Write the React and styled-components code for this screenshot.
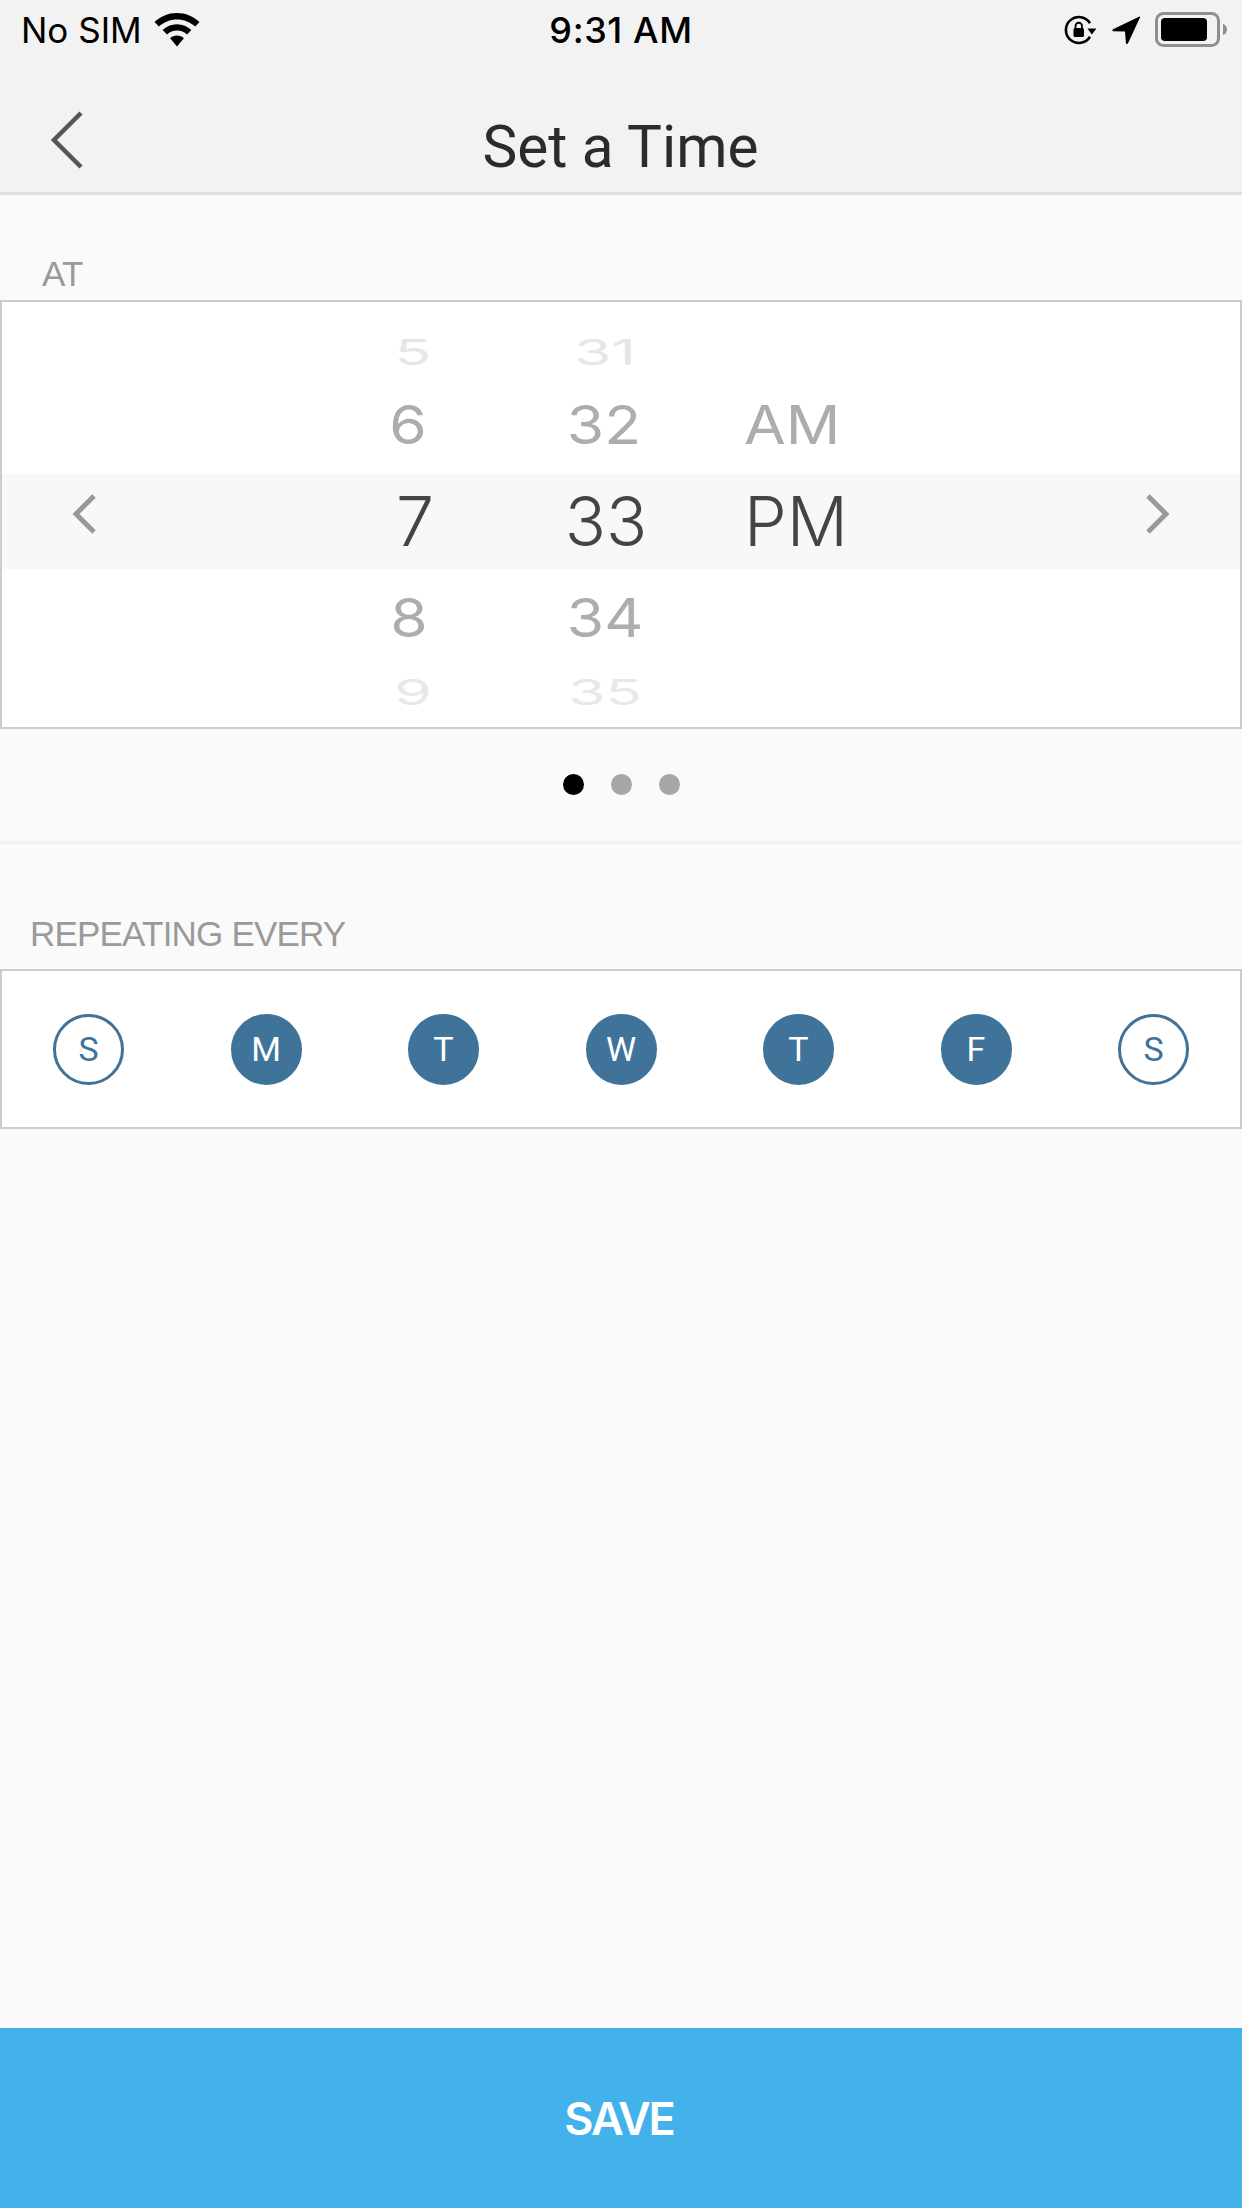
import React from "react";
import styled, { createGlobalStyle } from "styled-components";

const Global = createGlobalStyle`
  html, body { margin: 0; padding: 0; background: #fafafa; }
  #root { width: 1242px; }
`;

const Page = styled.div`
  width: 1242px;
  height: 2208px;
  display: flex;
  flex-direction: column;
  background: #fafafa;
  font-family: "Liberation Sans", Arial, sans-serif;
`;

const Top = styled.header`
  height: 192px;
  background: #f2f2f2;
  border-bottom: 3px solid #dedede;
  display: flex;
  flex-direction: column;
`;

const StatusBar = styled.div`
  height: 60px;
  display: grid;
  grid-template-columns: 1fr auto 1fr;
  align-items: center;
  color: #000;
  font-family: Inter, "Liberation Sans", sans-serif;
`;

const StatusLeft = styled.div`
  display: flex;
  align-items: center;
  padding-left: 21px;
  gap: 12px;
  font-size: 35px;
`;

const Clock = styled.div`
  font-size: 36px;
  font-weight: 500;
  letter-spacing: 0.6px;
`;

const StatusRight = styled.div`
  display: flex;
  align-items: center;
  justify-content: flex-end;
  padding-right: 15px;
  gap: 15px;
`;

const NavBar = styled.div`
  height: 132px;
  position: relative;
  display: flex;
  align-items: center;
  justify-content: center;
`;

const BackIcon = styled.svg`
  position: absolute;
  left: 50px;
  top: 50px;
`;

const Title = styled.h1`
  margin: 0;
  padding: 42px 1px 0 0;
  font-family: Roboto, "Liberation Sans", sans-serif;
  font-weight: 400;
  font-size: 58.5px;
  color: #2b2b2b;
`;

const Label = styled.div`
  padding-left: ${(p) => p.$left}px;
  padding-top: ${(p) => p.$top}px;
  height: ${(p) => p.$h}px;
  box-sizing: border-box;
  font-size: 35px;
  line-height: 40px;
  letter-spacing: -0.8px;
  color: #9a9a9a;
`;

const Card = styled.section`
  background: #fff;
  border: 2px solid #cccccc;
`;

const PickerRow = styled.div`
  display: grid;
  grid-template-columns: 350px 120px 266px 1fr auto;
  height: ${(p) => p.$h}px;
  padding-top: ${(p) => p.$pad || 0}px;
  box-sizing: border-box;
  background: ${(p) => (p.$selected ? "#f8f8f8" : "transparent")};
`;

const Cell = styled.div`
  text-align: ${(p) => p.$align || "center"};
  padding-left: ${(p) => p.$indent || 0}px;
  position: relative;
  left: ${(p) => p.$shift || 0}px;
  font-family: Inter, "Liberation Sans", sans-serif;
  font-size: ${(p) => p.$size}px;
  line-height: ${(p) => p.$lh}px;
  color: ${(p) => p.$color};
  transform: scale(${(p) => p.$stretch || 1}, ${(p) => p.$squash || 1});
  transform-origin: ${(p) => (p.$align === "left" ? "5px 50%" : "50% 50%")};
  font-weight: ${(p) => p.$weight || 400};
`;

const ArrowSlot = styled.div`
  padding: 19px ${(p) => p.$right || 0}px 0 ${(p) => p.$left || 0}px;
`;

const Arrow = styled.svg`
  display: block;
`;

const Dots = styled.div`
  height: 110px;
  padding-bottom: 2px;
  display: flex;
  align-items: center;
  justify-content: center;
  gap: 27px;
  border-bottom: 3px solid #f1f1f4;
`;

const Dot = styled.span`
  width: 21px;
  height: 21px;
  border-radius: 50%;
  background: ${(p) => (p.$on ? "#000" : "#a6a6a6")};
`;

const Week = styled(Card)`
  height: 156px;
  display: flex;
  align-items: center;
  justify-content: space-between;
  padding: 0 51px;
`;

const Day = styled.div`
  width: 71px;
  height: 71px;
  box-sizing: border-box;
  border-radius: 50%;
  border: 3px solid #3f7399;
  background: ${(p) => (p.$on ? "#3f7399" : "#fff")};
  color: ${(p) => (p.$on ? "#fff" : "#3f7399")};
  display: flex;
  align-items: center;
  justify-content: center;
  font-family: Roboto, "Liberation Sans", sans-serif;
  font-weight: 400;
  font-size: 34px;
`;

const Spacer = styled.div`
  flex: 1;
`;

const SaveButton = styled.button`
  height: 180px;
  border: 0;
  background: #43b1ea;
  color: #fff;
  font-family: Inter, "Liberation Sans", sans-serif;
  font-weight: 600;
  font-size: 45px;
  letter-spacing: -2.2px;
  padding: 0 4px 0 0;
`;

const Wifi = () => (
  <svg width="46" height="34" viewBox="0 0 46 34">
    <path d="M23 0C14.300 0 6.500 3.400.5 9l4.300 4.600C9.600 9.100 16 6.400 23 6.400s13.400 2.700 18.200 7.200L45.500 9C39.500 3.400 31.700 0 23 0z" fill="#000" />
    <path d="M23 11.200c-5.600 0-10.700 2.200-14.400 5.800l4.400 4.600c2.600-2.500 6.100-4 10-4s7.400 1.500 10 4l4.400-4.600c-3.700-3.600-8.800-5.800-14.400-5.800z" fill="#000" />
    <path d="M23 22.600c-2.700 0-5.100 1-6.900 2.700L23 33.600l6.900-8.300c-1.800-1.700-4.200-2.700-6.900-2.700z" fill="#000" />
  </svg>
);

const RotationLock = () => (
  <svg width="33" height="30" viewBox="0 0 33 30">
    <path d="M26 8.200A13 13 0 1 0 26 21.800" fill="none" stroke="#000" strokeWidth="2.600" />
    <path d="M23.400 13.500h9l-4.500 6z" fill="#000" />
    <rect x="9.500" y="13" width="10.500" height="9" rx="1.500" fill="#000" />
    <path d="M11.500 13.500v-2.500a3.200 3.200 0 0 1 6.500 0v2.500" fill="none" stroke="#000" strokeWidth="1.800" />
  </svg>
);

const Location = () => (
  <svg width="28" height="28" viewBox="0 0 28 28">
    <path d="M27.500.6 1 13.200c-1 .6-.7 2 .5 2l11.500.3.900 11.400c.1 1.200 1.600 1.400 2.100.4L28 1.400c.2-.6-.1-1-.5-.8z" fill="#000" />
  </svg>
);

const Battery = () => (
  <svg width="72" height="36" viewBox="0 0 72 36">
    <rect x="1.500" y="1.500" width="62" height="32" rx="7" fill="none" stroke="#8e8e8e" strokeWidth="3" />
    <rect x="6" y="6" width="46" height="23" rx="4" fill="#000" />
    <path d="M68 12c2.400.8 4 3 4 5.500s-1.600 4.700-4 5.500z" fill="#8e8e8e" />
  </svg>
);

const rows = [
  { h: 100, pad: 21, lh: 50, size: 54, stretch: 1.12, squash: 0.66, color: "#e6e6e6", hour: "5", min: "31", hs: 1, ms: 0 },
  { h: 72, lh: 46, size: 54, stretch: 1.12, color: "#adadad", hour: "6", min: "32", ap: "AM", hs: -4, ms: -1 },
  { h: 95, lh: 95, size: 68, weight: 350, color: "#444444", selected: true, hour: "7", min: "33", ap: "PM", hs: 3, ms: 1 },
  { h: 98, lh: 98, size: 54, stretch: 1.12, color: "#adadad", hour: "8", min: "34", hs: -3, ms: 0 },
  { h: 60, lh: 46, size: 54, stretch: 1.12, squash: 0.66, color: "#e8e8e8", hour: "9", min: "35", hs: 1, ms: 0 },
];

const days = [
  ["S", false],
  ["M", true],
  ["T", true],
  ["W", true],
  ["T", true],
  ["F", true],
  ["S", false],
];

export default function App() {
  return (
    <Page>
      <Global />
      <Top>
        <StatusBar>
          <StatusLeft>
            <span>No SIM</span>
            <Wifi />
          </StatusLeft>
          <Clock>9:31 AM</Clock>
          <StatusRight>
            <RotationLock />
            <Location />
            <Battery />
          </StatusRight>
        </StatusBar>
        <NavBar>
          <BackIcon width="34" height="60" viewBox="0 0 34 60">
            <path d="M31 3 4 30l27 27" fill="none" stroke="#555" strokeWidth="4.500" />
          </BackIcon>
          <Title>Set a Time</Title>
        </NavBar>
      </Top>

      <Label $left={42} $top={59} $h={105}>AT</Label>
      <Card>
        {rows.map((r) => {
          const look = { $size: r.size, $lh: r.lh, $color: r.color, $squash: r.squash, $stretch: r.stretch, $weight: r.weight };
          return (
            <PickerRow key={r.hour} $h={r.h} $pad={r.pad} $selected={r.selected}>
              <div>
                {r.selected && (
                  <ArrowSlot $left={69}>
                    <Arrow width="26" height="42" viewBox="0 0 26 42">
                      <path d="M23 3 5 21l18 18" fill="none" stroke="#999" strokeWidth="5" />
                    </Arrow>
                  </ArrowSlot>
                )}
              </div>
              <Cell {...look} $shift={r.hs}>{r.hour}</Cell>
              <Cell {...look} $shift={r.ms}>{r.min}</Cell>
              <Cell {...look} $align="left" $indent={6}>{r.ap}</Cell>
              {r.selected ? (
                <ArrowSlot $right={69}>
                  <Arrow width="26" height="42" viewBox="0 0 26 42">
                    <path d="M3 3l18 18L3 39" fill="none" stroke="#999" strokeWidth="5" />
                  </Arrow>
                </ArrowSlot>
              ) : (
                <div />
              )}
            </PickerRow>
          );
        })}
      </Card>
      <Dots>
        <Dot $on />
        <Dot />
        <Dot />
      </Dots>
      <Label $left={30} $top={70} $h={125}>REPEATING EVERY</Label>
      <Week>
        {days.map(([d, on], i) => (
          <Day key={i} $on={on}>{d}</Day>
        ))}
      </Week>
      <Spacer />
      <SaveButton>SAVE</SaveButton>
    </Page>
  );
}
